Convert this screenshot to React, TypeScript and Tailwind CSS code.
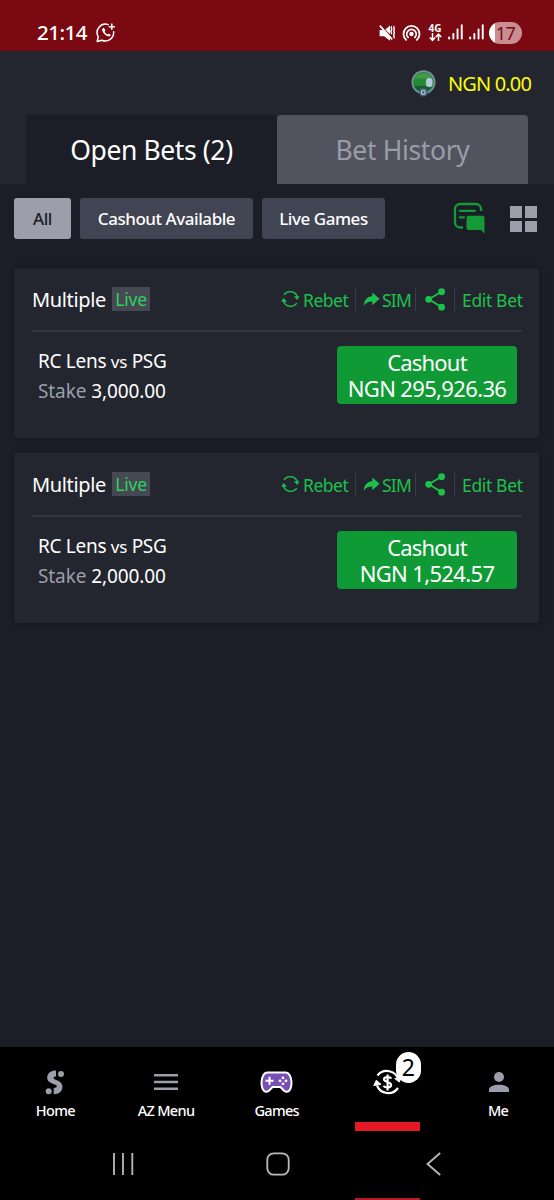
import type { ReactNode } from 'react'

interface Bet {
  id: number
  match: [string, string]
  stake: string
  cashout: string
}

const bets: Bet[] = [
  { id: 1, match: ['RC Lens', 'PSG'], stake: '3,000.00', cashout: 'NGN 295,926.36' },
  { id: 2, match: ['RC Lens', 'PSG'], stake: '2,000.00', cashout: 'NGN 1,524.57' },
]

function ChatCallIcon() {
  return (
    <svg width="20" height="20" viewBox="0 0 20 20" fill="none" stroke="#fff" strokeWidth="1.5">
      <path d="M12.2 1.6A8.4 8.4 0 0 0 2.3 13.8L1.2 18.4l4.700-1.100A8.400 8.400 0 0 0 17.600 8.800" strokeLinejoin="round" strokeLinecap="round" />
      <path d="M15.800.6v6.200M12.700 3.700h6.200" />
      <path d="M6.600 5.400c-2.400 2.200 4.600 9.700 7.500 7.500.9-.8.6-1.300-.1-1.700-1.500-.9-1.600-.6-2.400.3-1.200-.5-2.500-1.700-3-3 .8-.7 1.100-1 .3-2.300-.6-1-1.300-1.800-2.300-.8z" fill="#fff" stroke="none" />
    </svg>
  )
}

function MuteIcon() {
  return (
    <svg width="17" height="18" viewBox="0 0 17 18" fill="none" stroke="#fff">
      <path d="M.6 6h3.300l7.100 7.400v3.400L5.200 12.300H.6zM6.300 5.400 11 1.400v8.900z" fill="#fff" stroke="none" />
      <path d="m.8 1.600 12.400 13.800" strokeWidth="1.600" />
      <path d="M12.700 2.200c-1.600 1.500 1 2.500-.3 4s1 2.400-.2 3.900M15.300 2.200c-1.400 1.500.7 2.400-.2 3.900s.9 2.400-.1 3.900.6 2.800.2 4.300" strokeWidth="1.500" />
    </svg>
  )
}

function HotspotIcon() {
  return (
    <svg width="19" height="18" viewBox="0 0 19 18" fill="none" stroke="#fff" strokeWidth="1.800" strokeLinecap="round">
      <circle cx="9.500" cy="10" r="2.200" fill="#fff" stroke="none" />
      <path d="M6.100 13.400a4.700 4.700 0 1 1 6.800 0M4.200 15.900a8 8 0 1 1 10.600 0" />
    </svg>
  )
}

function SignalIcon() {
  return (
    <svg width="15" height="16" viewBox="0 0 15 16" fill="#fff">
      <rect x=".2" y="12.500" width="1.900" height="3" rx=".8" />
      <rect x="4.400" y="9" width="1.900" height="6.500" rx=".8" />
      <rect x="8.600" y="4.600" width="1.900" height="10.900" rx=".8" />
      <rect x="12.800" y=".2" width="1.900" height="15.300" rx=".8" />
    </svg>
  )
}

function StatusBar() {
  return (
    <div className="flex h-[51px] items-start bg-[#7a0911] pt-[20px] text-white">
      <span className="ml-[37px] w-[59px] text-[20.5px] leading-[24px] font-medium tracking-[-0.5px] whitespace-nowrap">21:14</span>
      <div className="mt-[3px] h-[20px]">
        <ChatCallIcon />
      </div>
      <div className="mt-[4px] ml-[263px] flex">
        <MuteIcon />
        <div className="ml-[6px]">
          <HotspotIcon />
        </div>
        <div className="ml-[7px] flex w-[14px] flex-col items-center">
          <span className="h-[9px] text-[10px] leading-[9px] font-bold">4G</span>
          <svg width="13" height="9" viewBox="0 0 13 9" fill="none" stroke="#fff" strokeWidth="1.5">
            <path d="M3.5 0v7M.8 4.5l2.7 2.8 2.7-2.8M9.5 8V1.2M6.8 4l2.7-2.8L12.2 4" />
          </svg>
        </div>
        <div className="ml-[6px]">
          <SignalIcon />
        </div>
        <div className="ml-[6px]">
          <SignalIcon />
        </div>
        <div className="-mt-[2px] ml-[5px] flex h-[22px] w-[33px] items-center justify-center overflow-hidden rounded-full bg-[linear-gradient(90deg,#fff_17%,#c88d90_17%)] text-[18px] tracking-[-0.5px] text-[#7a0911]">
          17
        </div>
      </div>
    </div>
  )
}

function Avatar() {
  return (
    <svg width="25" height="27" viewBox="0 0 25 27">
      <circle cx="12.500" cy="12.300" r="12" fill="#7d8d9d" />
      <circle cx="12.500" cy="12.300" r="10.400" fill="#238a35" />
      <path d="M3 9c4-7 14-8 18.500-1-7 1.500-12-1-18.500 1z" fill="#459a48" />
      <path d="M3 16c7-1 12 1 18 0-3 7-14 8-18 0z" fill="#146034" />
      <rect x="15" y="8" width="6.500" height="9" rx="3" fill="#b3cad8" />
      <circle cx="12.300" cy="22.200" r="4.300" fill="#47617c" />
      <circle cx="12.300" cy="22.200" r="2" fill="none" stroke="#b7cada" strokeWidth="1.100" />
    </svg>
  )
}

function NotesIcon() {
  return (
    <svg width="32" height="32" viewBox="0 0 32 32" fill="none" stroke="#149b37" strokeWidth="2.300">
      <path d="M10 25.500H7A5 5 0 0 1 2 20.500V7a5 5 0 0 1 5-5h16a5 5 0 0 1 5 5v2" />
      <path d="M6.800 8.800h15M6.800 15.300h4.200" strokeLinecap="round" />
      <path d="M15.500 13.800h14a2 2 0 0 1 2 2V31.500l-3.500-3.500H15.500a2 2 0 0 1-2-2V15.800a2 2 0 0 1 2-2z" fill="#149b37" stroke="none" />
    </svg>
  )
}

function Header() {
  return (
    <header className="h-[133px] bg-[#23262f]">
      <div className="flex h-[64px] items-center justify-end pr-[22px]">
        <Avatar />
        <span className="ml-[12px] w-[84px] pt-[2px] text-[20px] tracking-[-0.85px] whitespace-nowrap text-[#fdfd0a]">NGN 0.00</span>
      </div>
      <div className="mr-[26px] ml-[26px] flex h-[69px] text-[26.5px]">
        <button className="w-[251px] rounded-t-[4px] bg-[#1b1e26] pt-[3px] tracking-[-0.4px] text-white">Open Bets (2)</button>
        <button className="w-[251px] rounded-t-[4px] bg-[#51545f] pt-[3px] tracking-[-0.35px] text-[#9a9ca8]">Bet History</button>
      </div>
    </header>
  )
}

function Filters() {
  return (
    <div className="flex h-[69px] pt-[14px] pl-[14px]">
      <div className="flex h-[41px] gap-[9px] text-[17px] font-medium tracking-[-0.45px] whitespace-nowrap text-white">
        <button className="w-[57px] rounded-[3px] bg-[#9c9eab] pt-px text-[#1b1e26]">All</button>
        <button className="w-[173px] rounded-[3px] bg-[#414553] pt-px">Cashout Available</button>
        <button className="w-[123px] rounded-[3px] bg-[#414553] pt-px">Live Games</button>
      </div>
      <div className="mt-[4px] ml-[68px]">
        <NotesIcon />
      </div>
      <div className="mt-[8px] ml-[25px] grid h-[26px] w-[27px] grid-cols-2 gap-[3px]">
        <i className="bg-[#9c9eab]" />
        <i className="bg-[#9c9eab]" />
        <i className="bg-[#9c9eab]" />
        <i className="bg-[#9c9eab]" />
      </div>
    </div>
  )
}

function BetActions() {
  return (
    <div className="flex h-[24px] items-center text-[17.5px] whitespace-nowrap text-[#1cc24b]">
      <svg width="19" height="18" viewBox="0 0 19 18" fill="none" stroke="#1cc24b" strokeWidth="1.400">
        <path d="M3 4.800A7.600 7.600 0 0 1 16.400 7M15.800 13.200A7.600 7.600 0 0 1 2.400 11" />
        <path d="m13.200 6.500 5 0-1.900 3.300zM5.600 11.500h-5l1.900-3.300z" fill="#1cc24b" strokeWidth=".4" />
      </svg>
      <span className="ml-[3px] w-[46px] pt-[2px] tracking-[-0.5px]">Rebet</span>
      <i className="ml-[6px] h-[23px] w-px bg-[#3a3d48]" />
      <svg className="ml-[7px]" width="17" height="15" viewBox="0 0 17 15" fill="#1cc24b">
        <path d="M9.300.4 16.500 6.800l-7.200 6.400V9.600C5.500 9.400 3 10.600.9 13.800.8 8.600 4 4.400 9.300 4.200z" />
      </svg>
      <span className="ml-[2px] w-[29px] pt-[2px] tracking-[-0.8px]">SIM</span>
      <i className="ml-[4px] h-[23px] w-px bg-[#3a3d48]" />
      <svg className="ml-[9px]" width="21" height="23" viewBox="0 0 21 23" fill="#1cc24b" stroke="#1cc24b" strokeWidth="1.800">
        <path d="M16.800 3.600 3.800 11.300l13 8" fill="none" />
        <circle cx="16.600" cy="3.700" r="2.500" />
        <circle cx="3.600" cy="11.300" r="2.500" />
        <circle cx="16.600" cy="19.200" r="2.500" />
      </svg>
      <i className="ml-[8px] h-[23px] w-px bg-[#3a3d48]" />
      <span className="ml-[7px] w-[60px] pt-[2px] tracking-[-0.35px]">Edit Bet</span>
    </div>
  )
}

function BetCard({ bet }: { bet: Bet }) {
  return (
    <article className="h-[170px] rounded-[3px] bg-[#23262f] pr-[17px] pl-[18px] shadow-[0_1px_6px_rgba(0,0,0,0.3)]">
      <div className="flex h-[64px] items-center justify-between border-b-2 border-[#333640]">
        <div className="flex items-center text-white">
          <span className="w-[80px] pt-[2px] text-[20px] tracking-[-0.35px] whitespace-nowrap">Multiple</span>
          <span className="flex h-[24px] w-[38px] items-center justify-center bg-[#464953] pt-px text-[17.5px] tracking-[-0.2px] text-[#2bd45c]">Live</span>
        </div>
        <BetActions />
      </div>
      <div className="flex justify-between pr-[5px] pl-[6px]">
        <div className="pt-[14px] text-[19px] leading-[30px] tracking-[-0.3px] whitespace-nowrap text-white">
          <p>
            {bet.match[0]} <span className="text-[17px]">vs</span> {bet.match[1]}
          </p>
          <p className="-mt-px tracking-[-0.1px]">
            <span className="text-[#9c9eab]">Stake</span> {bet.stake}
          </p>
        </div>
        <button className="mt-[14px] h-[58px] w-[180px] rounded-[4px] bg-[#109a36] text-[22px] leading-[26px] whitespace-nowrap text-white">
          <span className="block tracking-[-0.8px]">Cashout</span>
          <span className="block tracking-[-0.65px]">{bet.cashout}</span>
        </button>
      </div>
    </article>
  )
}

function NavItem({ label, children }: { label: string; children: ReactNode }) {
  return (
    <a className="flex w-[110.7px] flex-col items-center">
      <div className="flex h-[28px] items-center">{children}</div>
      <span className="mt-[4px] text-[14.5px] leading-[20px] font-medium tracking-[-0.7px] whitespace-nowrap">{label}</span>
    </a>
  )
}

function BottomNav() {
  return (
    <nav className="flex h-[84px] pt-[21px] text-white">
      <NavItem label="Home">
        <svg width="20" height="25" viewBox="0 0 20 25" fill="#9c9eab">
          <path d="M11 .5v6C8.500 6.500 7.600 8.400 9.600 9.200c4.500 1.800 8 3.300 7.800 7.800-.2 4.800-4.100 7.200-8.700 7.200v-6.200c3.400.1 4.200-2.200 1.700-3.200-4.600-1.800-8.300-3.100-8.200-7.300C2.400 3 6.400.4 11 .5z" />
          <circle cx="16" cy="4" r="3" />
          <circle cx="3.700" cy="21.200" r="3" />
        </svg>
      </NavItem>
      <NavItem label="AZ Menu">
        <svg width="24" height="18" viewBox="0 0 24 18" fill="#9c9eab">
          <path d="M0 1h24v2.500H0zM0 7.800h24v2.500H0zM0 14.500h24V17H0z" />
        </svg>
      </NavItem>
      <NavItem label="Games">
        <svg width="33" height="23" viewBox="0 0 33 23" fill="none" stroke="#fff">
          <path d="M7.500 1.500h18c3.500 0 6 4.500 6 10 0 8-4 11-7.500 8.300L20.500 16h-8L9 19.800C5.500 22.500 1.500 19.500 1.500 11.500c0-5.500 2.500-10 6-10z" fill="#7750b5" strokeWidth="2" />
          <path d="M9.500 5.800v8M5.500 9.800h8" strokeWidth="2" />
          <g fill="#fff" stroke="none">
            <circle cx="23" cy="6.800" r="1.400" />
            <circle cx="23" cy="12.800" r="1.400" />
            <circle cx="20" cy="9.800" r="1.400" />
            <circle cx="26" cy="9.800" r="1.400" />
          </g>
        </svg>
      </NavItem>
      <div className="relative flex w-[110.7px] flex-col items-center">
        <div className="flex h-[28px] items-center">
          <svg width="29" height="29" viewBox="0 0 29 29" fill="none" stroke="#fff" strokeWidth="2.200">
            <path d="M4.500 7.500A12 12 0 0 1 25.500 12M25 20A12 12 0 0 1 4 17.500" />
            <path d="m.8 17.500 2.500-5.200 4.600 4zM21.700 10.500l4.700 3.600 1.300-4.300z" fill="#fff" strokeWidth="1" />
            <path d="M18.400 10.500c-1-1.600-7-2.500-7.400.7-.3 3.300 7.200 2.300 7.100 5.800 0 3.300-6.200 3-7.600.7M14.600 6.500v16" />
          </svg>
        </div>
        <span className="absolute -top-[16px] right-[22px] flex h-[31px] w-[25px] items-center justify-center rounded-full bg-white text-[23px] text-black">2</span>
        <i className="mt-[26px] h-[9px] w-[65px] bg-[#e41926]" />
      </div>
      <NavItem label="Me">
        <svg className="ml-px" width="20" height="20" viewBox="0 0 20 20" fill="#9c9eab">
          <circle cx="10" cy="5" r="5" />
          <path d="M0 20v-2.500C0 11 20 11 20 17.500V20z" />
        </svg>
      </NavItem>
    </nav>
  )
}

function SystemNav() {
  return (
    <div className="h-[69px]">
      <div className="flex h-[67px] items-start pt-[21px]">
        <svg className="ml-[112px]" width="22" height="24" viewBox="0 0 22 24" stroke="#bababa" strokeWidth="1.800">
          <path d="M2 1v22M11 1v22M20.300 1v22" />
        </svg>
        <svg className="ml-[132px]" width="24" height="24" viewBox="0 0 24 24" fill="none" stroke="#bababa" strokeWidth="1.800">
          <rect x="1.300" y="1.300" width="21.400" height="21.400" rx="6.500" />
        </svg>
        <svg className="ml-[135px]" width="18" height="24" viewBox="0 0 18 24" fill="none" stroke="#bababa" strokeWidth="1.800">
          <path d="M15.200 1 2.500 12l12.700 11" />
        </svg>
      </div>
      <div className="ml-[355px] h-[2px] w-[65px] bg-[#b51b27]" />
    </div>
  )
}

export default function App() {
  return (
    <div className="flex h-[1200px] w-[554px] flex-col overflow-hidden bg-[#1b1e26] font-['Noto_Sans','Open_Sans',sans-serif]">
      <StatusBar />
      <Header />
      <Filters />
      <main className="mt-[15px] mr-[15px] ml-[14px] flex flex-1 flex-col gap-[15px]">
        {bets.map((bet) => (
          <BetCard key={bet.id} bet={bet} />
        ))}
      </main>
      <footer className="bg-black">
        <BottomNav />
        <SystemNav />
      </footer>
    </div>
  )
}
